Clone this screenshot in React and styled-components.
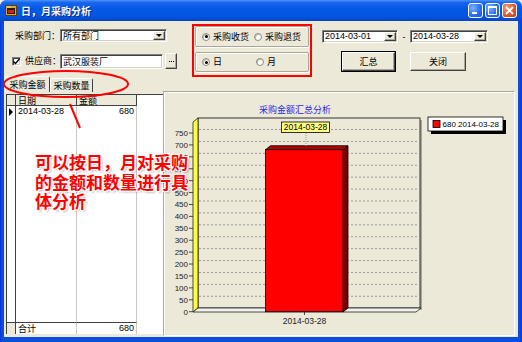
import React from 'react';
import styled, { createGlobalStyle, css } from 'styled-components';

const FONT = `"Liberation Sans", "Noto Sans CJK SC", sans-serif`;
const CJK = `"Noto Sans CJK SC", "Liberation Sans", sans-serif`;
const BEIGE = '#ECE9D8';

const GlobalStyle = createGlobalStyle`
  html, body { margin: 0; padding: 0; background: ${BEIGE}; }
  body { font-family: ${FONT}; font-size: 9px; }
  * { box-sizing: border-box; }
`;

const Window = styled.div`
  position: relative;
  width: 522px;
  height: 342px;
  display: flex;
  flex-direction: column;
  background: linear-gradient(to right, #0831d9 0, #0a4fdc 2px, #0a4fdc calc(100% - 2px), #0831d9 100%);
  border-radius: 7px 7px 0 0;
  overflow: hidden;
  font-family: ${FONT};
  font-size: 9px;
  color: #000;
`;

const TitleBar = styled.div`
  height: 21px;
  flex: none;
  display: flex;
  align-items: center;
  padding: 0 5px;
  background: linear-gradient(to bottom, #4a94ff 0%, #1a66ee 12%, #0558e6 40%, #0454e0 80%, #0346c4 100%);
`;

const TitleText = styled.span`
  margin-left: 4px;
  color: #fff;
  font-family: ${CJK};
  font-weight: bold;
  font-size: 10px;
  text-shadow: 1px 1px 0 #0a2a8a;
  flex: 1;
`;

const CaptionButtons = styled.div`
  display: flex;
  gap: 2px;
`;

const CapButton = styled.div`
  width: 15px;
  height: 15px;
  border: 1px solid #fff;
  border-radius: 3px;
  display: flex;
  align-items: center;
  justify-content: center;
  background: ${p => p.$close
    ? 'radial-gradient(circle at 30% 30%, #f4a07f, #e0582c 55%, #c43c12)'
    : 'radial-gradient(circle at 30% 30%, #7fb2ff, #2b6ff2 55%, #1652d8)'};
`;

const Body = styled.div`
  flex: 1;
  min-height: 0;
  margin: 0 4px 5px;
  background: ${BEIGE};
  display: flex;
`;

const LeftPane = styled.div`
  width: 159px;
  flex: none;
  display: flex;
  flex-direction: column;
`;

const FieldRow = styled.div`
  display: flex;
  align-items: center;
  height: ${p => p.$h}px;
  margin-top: ${p => p.$mt}px;
  padding-left: ${p => p.$pl}px;
  white-space: nowrap;
`;

const Label = styled.span`
  width: ${p => p.$w}px;
  flex: none;
  font-family: ${CJK};
  font-size: 9px;
  line-height: 10px;
`;

const sunken = css`
  background: #fff;
  border: 1px solid;
  border-color: #808080 #fff #fff #808080;
  box-shadow: inset 1px 1px 0 #404040, inset -1px -1px 0 #d4d0c8;
`;

const raised = css`
  background: ${BEIGE};
  border: 1px solid;
  border-color: #fff #404040 #404040 #fff;
  box-shadow: inset -1px -1px 0 #aca899;
`;

const Combo = styled.div`
  ${sunken};
  width: ${p => p.$w}px;
  height: ${p => p.$h || 13}px;
  flex: none;
  display: flex;
  align-items: center;
  padding: 0 1px 0 2px;
  font-family: ${p => (p.$cjk ? CJK : FONT)};
  font-size: 9px;
  line-height: 9px;
`;

const ComboText = styled.span`
  flex: 1;
  white-space: nowrap;
`;

const DropButton = styled.div`
  ${raised};
  width: 12px;
  height: 9px;
  flex: none;
  display: flex;
  align-items: center;
  justify-content: center;
  &::after {
    content: '';
    border-left: 3px solid transparent;
    border-right: 3px solid transparent;
    border-top: 3px solid #000;
  }
`;

const CheckBox = styled.div`
  ${sunken};
  width: 9px;
  height: 9px;
  flex: none;
  margin-right: 4px;
  display: flex;
  align-items: center;
  justify-content: center;
`;

const SmallButton = styled.div`
  ${raised};
  width: 12px;
  height: 16px;
  margin-left: 2px;
  flex: none;
  display: flex;
  align-items: center;
  justify-content: center;
  gap: 1px;
`;

const Dot = styled.span`
  width: 1px;
  height: 1px;
  background: #000;
`;

const TabStrip = styled.div`
  display: flex;
  align-items: flex-end;
  height: 16px;
  margin-top: 7px;
  padding-left: 1px;
`;

const Tab = styled.div`
  ${raised};
  box-shadow: none;
  border-bottom: none;
  width: ${p => p.$w}px;
  height: ${p => (p.$active ? 16 : 14)}px;
  display: flex;
  align-items: center;
  justify-content: center;
  font-family: ${CJK};
  font-size: 9px;
  line-height: 10px;
  border-radius: 2px 2px 0 0;
`;

const GridFrame = styled.div`
  flex: 1;
  min-height: 0;
  margin: 2px 0 3px 2px;
  background: #fff;
  border-left: 1px solid #404040;
  border-top: 1px solid #404040;
  display: flex;
`;

const DataGrid = styled.div`
  display: grid;
  grid-template-columns: 9px 61px 60px;
  grid-template-rows: 11px 11px 1fr 12px;
  width: 130px;
`;

const cellKinds = {
  head: css`background: ${BEIGE}; border-right: 1px solid #404040; border-bottom: 1px solid #404040;`,
  ind: css`background: #fff; border-right: 1px solid #404040;`,
  indFoot: css`background: ${BEIGE}; border-right: 1px solid #404040; border-top: 1px solid #404040;`,
  data: css`background: #fff; border-right: 1px solid #c8c8c8;`,
  foot: css`background: #fff; border-right: 1px solid #c8c8c8; border-top: 1px solid #404040;`,
};

const Cell = styled.div`
  ${p => cellKinds[p.$kind]};
  display: flex;
  align-items: center;
  justify-content: ${p => (p.$right ? 'flex-end' : 'flex-start')};
  padding: 0 2px;
  font-family: ${p => (p.$cjk ? CJK : FONT)};
  font-size: 9px;
  line-height: 9px;
  white-space: nowrap;
`;

const RowArrow = styled.span`
  width: 0;
  height: 0;
  border-top: 4px solid transparent;
  border-bottom: 4px solid transparent;
  border-left: 4px solid #000;
`;

const RightPane = styled.div`
  flex: 1;
  display: flex;
  flex-direction: column;
  min-width: 0;
`;

const Controls = styled.div`
  height: 70px;
  flex: none;
  display: flex;
  align-items: flex-start;
  padding: 3px 0 0 29px;
`;

const RedBox = styled.div`
  width: 120px;
  height: 53px;
  border: 2px solid #ff0000;
  padding: 0 1px 3px;
  display: flex;
  flex-direction: column;
  gap: 5px;
`;

const GroupBox = styled.div`
  height: ${p => p.$h}px;
  border: 1px solid #aca899;
  box-shadow: inset 1px 1px 0 #fff, 1px 1px 0 #fff;
  border-radius: 2px;
  display: flex;
  align-items: center;
  padding-left: 6px;
`;

const RadioItem = styled.label`
  width: ${p => p.$w}px;
  flex: none;
  display: flex;
  align-items: center;
  gap: 3px;
  font-family: ${CJK};
  font-size: 9px;
  line-height: 10px;
  white-space: nowrap;
`;

const RadioDot = styled.span`
  width: 8px;
  height: 8px;
  flex: none;
  border-radius: 50%;
  background: #fff;
  border: 1px solid #8a8a80;
  box-shadow: inset 1px 1px 0 #c0c0b8;
  display: flex;
  align-items: center;
  justify-content: center;
  &::after {
    content: '';
    width: 3px;
    height: 3px;
    border-radius: 50%;
    background: ${p => (p.$on ? '#000' : 'transparent')};
  }
`;

const DateArea = styled.div`
  margin-left: 10px;
  margin-top: 6px;
  display: flex;
  flex-direction: column;
`;

const DateRow = styled.div`
  display: flex;
  align-items: center;
  height: 13px;
`;

const Dash = styled.span`
  width: 12px;
  text-align: center;
  font-size: 9px;
`;

const ButtonRow = styled.div`
  display: flex;
  gap: 15px;
  margin-top: 9px;
  padding-left: 20px;
`;

const PushButton = styled.div`
  ${raised};
  width: ${p => p.$w}px;
  height: 19px;
  display: flex;
  align-items: center;
  justify-content: center;
  font-family: ${CJK};
  font-size: 9px;
  ${p => p.$default && css`
    outline: 1px solid #000;
    outline-offset: 0;
  `}
`;

const ChartPanel = styled.div`
  flex: 1;
  min-height: 0;
  margin: 0 3px 1px 0;
  border: 1px solid;
  border-color: #aca899 #fff #fff #aca899;
  box-shadow: inset 1px 1px 0 #fff;
  display: flex;
`;

const ChartSvg = styled.svg`
  display: block;
  width: 100%;
  height: 100%;
  font-family: ${FONT};
`;

const Overlay = styled.svg`
  position: absolute;
  left: 0;
  top: 60px;
  pointer-events: none;
  overflow: visible;
`;

const Annotation = styled.div`
  position: absolute;
  left: 35px;
  top: 152px;
  color: #ff0000;
  font-family: ${CJK};
  font-weight: bold;
  font-size: 17px;
  line-height: 19.5px;
  white-space: nowrap;
  text-shadow: 1px 0 0 #fff, -1px 0 0 #fff, 0 1px 0 #fff, 0 -1px 0 #fff,
    1px 1px 0 #fff, -1px -1px 0 #fff, 1px -1px 0 #fff, -1px 1px 0 #fff, 2px 2px 2px rgba(0,0,0,0.25);
`;

const AppIcon = () => (
  <svg width="12" height="11" viewBox="0 0 12 11">
    <rect x="0.5" y="0.5" width="11" height="10" fill="#d8a83a" stroke="#5a3d08" />
    <rect x="2" y="3" width="8" height="6" fill="#2a1a10" />
    <rect x="3" y="5" width="6" height="3" fill="#d02018" />
    <rect x="2" y="1.5" width="4" height="1" fill="#f5dc8c" />
  </svg>
);

const Y = v => 311.7 - (v * 178.7) / 750;
const TICKS = Array.from({ length: 16 }, (_, i) => i * 50);

const Chart = () => (
  <ChartSvg viewBox="164 92 350 243" preserveAspectRatio="none">
    <text x="295" y="113" textAnchor="middle" fill="#2a2ae6" fontSize="9" fontFamily={CJK}>采购金额汇总分析</text>
    <rect x="200" y="120" width="222" height="190" fill="#a8a698" />
    <rect x="198" y="118" width="222" height="190" fill={BEIGE} stroke="#333" strokeWidth="1" />
    {TICKS.filter(v => v > 0).map(v => (
      <line key={v} x1="199" x2="419" y1={Y(v) - 3.5} y2={Y(v) - 3.5} stroke="#9a9a9a" strokeWidth="1" strokeDasharray="2 2" />
    ))}
    <polygon points="193,122 198,118 198,308 193,312" fill="#ffff40" stroke="#222" strokeWidth="0.8" />
    <polygon points="193,312 198,308 421,308 416,312" fill="#f2f2ee" stroke="#222" strokeWidth="0.8" />
    {TICKS.map(v => (
      <g key={v}>
        <line x1="189" x2="193" y1={Y(v)} y2={Y(v)} stroke="#222" strokeWidth="0.8" />
        <text x="188" y={Y(v) + 3} textAnchor="end" fontSize="8" fill="#222">{v}</text>
      </g>
    ))}
    <polygon points="343,149.7 348,145.7 348,308 343,312" fill="#7a0000" stroke="#000" strokeWidth="0.8" />
    <polygon points="265.5,149.7 343,149.7 348,145.7 270.5,145.7" fill="#b00000" stroke="#000" strokeWidth="0.8" />
    <rect x="265.5" y="149.7" width="77.5" height="162" fill="#ff0000" stroke="#000" strokeWidth="0.8" />
    <line x1="306" x2="306" y1="133" y2="146" stroke="#999" strokeWidth="1" strokeDasharray="1 1" />
    <rect x="281.5" y="122" width="48" height="10.5" fill="#ffff80" stroke="#000" strokeWidth="0.8" />
    <text x="305.5" y="130.3" textAnchor="middle" fontSize="8.5" fill="#000">2014-03-28</text>
    <line x1="304.5" x2="304.5" y1="312" y2="315" stroke="#222" strokeWidth="0.8" />
    <text x="304.5" y="324" textAnchor="middle" fontSize="8.5" fill="#222">2014-03-28</text>
    <rect x="431" y="120" width="75" height="14" fill="#000" />
    <rect x="428" y="117" width="75" height="14" fill="#fff" stroke="#000" strokeWidth="0.8" />
    <rect x="433" y="120.5" width="7" height="7" fill="#ff0000" stroke="#000" strokeWidth="0.8" />
    <text x="442.5" y="127" fontSize="8" fill="#000">680 2014-03-28</text>
  </ChartSvg>
);

export default function App() {
  return (
    <>
      <GlobalStyle />
      <Window>
        <TitleBar>
          <AppIcon />
          <TitleText>日，月采购分析</TitleText>
          <CaptionButtons>
            <CapButton>
              <svg width="7" height="7" viewBox="0 0 7 7"><rect x="0" y="5" width="5" height="2" fill="#fff" /></svg>
            </CapButton>
            <CapButton>
              <svg width="9" height="9" viewBox="0 0 9 9"><rect x="0.5" y="0.5" width="8" height="8" fill="none" stroke="#fff" /><rect x="0" y="0" width="9" height="2" fill="#fff" /></svg>
            </CapButton>
            <CapButton $close>
              <svg width="9" height="9" viewBox="0 0 9 9"><path d="M1 1 L8 8 M8 1 L1 8" stroke="#fff" strokeWidth="1.8" /></svg>
            </CapButton>
          </CaptionButtons>
        </TitleBar>
        <Body>
          <LeftPane>
            <FieldRow $h={13} $mt={8} $pl={11}>
              <Label $w={45}>采购部门：</Label>
              <Combo $w={107} $cjk>
                <ComboText>所有部门</ComboText>
                <DropButton />
              </Combo>
            </FieldRow>
            <FieldRow $h={16} $mt={11} $pl={8}>
              <CheckBox>
                <svg width="7" height="7" viewBox="0 0 7 7"><path d="M0.5 3.5 L2.5 5.5 L6.5 1" fill="none" stroke="#000" strokeWidth="1.4" /></svg>
              </CheckBox>
              <Label $w={35}>供应商：</Label>
              <Combo $w={103} $h={15} $cjk>
                <ComboText>武汉服装厂</ComboText>
              </Combo>
              <SmallButton aria-label="..."><Dot /><Dot /><Dot /></SmallButton>
            </FieldRow>
            <TabStrip>
              <Tab $active $w={45}>采购金额</Tab>
              <Tab $w={43}>采购数量</Tab>
            </TabStrip>
            <GridFrame>
              <DataGrid>
                <Cell $kind="head" />
                <Cell $kind="head" $cjk>日期</Cell>
                <Cell $kind="head" $cjk>金额</Cell>
                <Cell $kind="ind"><RowArrow /></Cell>
                <Cell $kind="data">2014-03-28</Cell>
                <Cell $kind="data" $right>680</Cell>
                <Cell $kind="ind" />
                <Cell $kind="data" />
                <Cell $kind="data" />
                <Cell $kind="indFoot" />
                <Cell $kind="foot" $cjk>合计</Cell>
                <Cell $kind="foot" $right>680</Cell>
              </DataGrid>
            </GridFrame>
          </LeftPane>
          <RightPane>
            <Controls>
              <RedBox>
                <GroupBox $h={21}>
                  <RadioItem $w={52}><RadioDot $on />采购收货</RadioItem>
                  <RadioItem $w={50}><RadioDot />采购退货</RadioItem>
                </GroupBox>
                <GroupBox $h={20}>
                  <RadioItem $w={54}><RadioDot $on />日</RadioItem>
                  <RadioItem $w={30}><RadioDot />月</RadioItem>
                </GroupBox>
              </RedBox>
              <DateArea>
                <DateRow>
                  <Combo $w={76}><ComboText>2014-03-01</ComboText><DropButton /></Combo>
                  <Dash>-</Dash>
                  <Combo $w={78}><ComboText>2014-03-28</ComboText><DropButton /></Combo>
                </DateRow>
                <ButtonRow>
                  <PushButton $w={53} $default>汇总</PushButton>
                  <PushButton $w={56}>关闭</PushButton>
                </ButtonRow>
              </DateArea>
            </Controls>
            <ChartPanel>
              <Chart />
            </ChartPanel>
          </RightPane>
        </Body>
        <Overlay width="140" height="80" viewBox="0 60 140 80">
          <ellipse cx="66" cy="84" rx="62" ry="13" fill="none" stroke="#ff0000" strokeWidth="2" />
          <line x1="70" y1="104" x2="80" y2="128" stroke="#ff0000" strokeWidth="2" />
        </Overlay>
        <Annotation>
          可以按日，月对采购<br />
          的金额和数量进行具<br />
          体分析
        </Annotation>
      </Window>
    </>
  );
}
